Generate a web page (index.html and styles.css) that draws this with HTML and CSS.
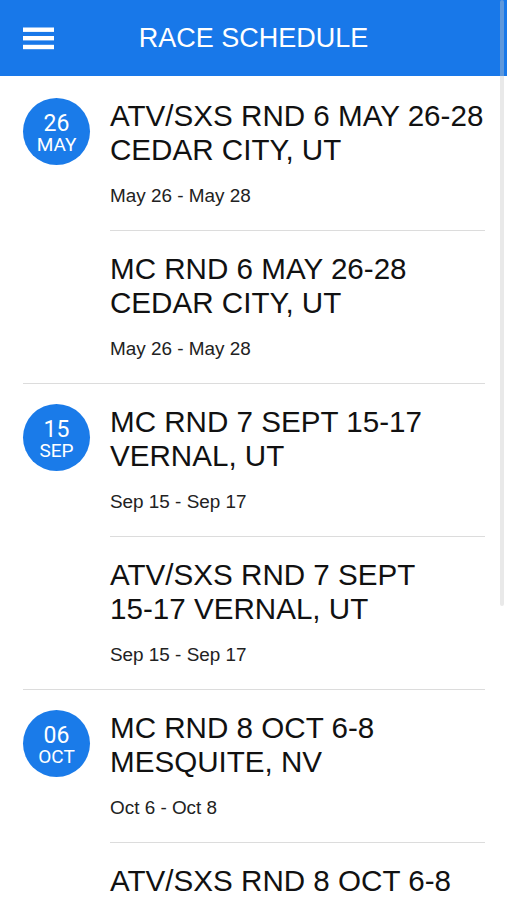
FILE: index.html
```html
<!DOCTYPE html>
<html lang="en">
<head>
    <meta charset="UTF-8">
    <meta name="viewport" content="width=device-width, initial-scale=1.0">
    <title>Race Schedule</title>
    <link rel="stylesheet" href="styles.css">
</head>
<body>
    <div class="screen">
        <header class="topbar">
            <button class="menu-btn" aria-label="Menu">
                <svg width="31" height="23" viewBox="0 0 31 23">
                    <rect x="0" y="0.5" width="31" height="4.4" fill="#fff"/>
                    <rect x="0" y="9" width="31" height="4.4" fill="#fff"/>
                    <rect x="0" y="17.8" width="31" height="4.4" fill="#fff"/>
                </svg>
            </button>
            <h1 class="title">RACE SCHEDULE</h1>
            <span></span>
        </header>

        <main class="schedule">
            <section class="group">
                <div class="badge">
                    <span class="day">26</span>
                    <span class="month">MAY</span>
                </div>
                <div class="events">
                    <div class="event">
                        <h2>ATV/SXS RND 6 MAY <span class="nb">26-28</span> CEDAR CITY, UT</h2>
                        <p>May 26 - May 28</p>
                    </div>
                    <div class="event">
                        <h2>MC RND 6 MAY <span class="nb">26-28</span> CEDAR CITY, UT</h2>
                        <p>May 26 - May 28</p>
                    </div>
                </div>
            </section>

            <section class="group">
                <div class="badge">
                    <span class="day">15</span>
                    <span class="month">SEP</span>
                </div>
                <div class="events">
                    <div class="event">
                        <h2>MC RND 7 SEPT <span class="nb">15-17</span> VERNAL, UT</h2>
                        <p>Sep 15 - Sep 17</p>
                    </div>
                    <div class="event">
                        <h2>ATV/SXS RND 7 SEPT <span class="nb">15-17</span> VERNAL, UT</h2>
                        <p>Sep 15 - Sep 17</p>
                    </div>
                </div>
            </section>

            <section class="group">
                <div class="badge">
                    <span class="day">06</span>
                    <span class="month">OCT</span>
                </div>
                <div class="events">
                    <div class="event">
                        <h2>MC RND 8 OCT <span class="nb">6-8</span> MESQUITE, NV</h2>
                        <p>Oct 6 - Oct 8</p>
                    </div>
                    <div class="event">
                        <h2>ATV/SXS RND 8 OCT <span class="nb">6-8</span> MESQUITE, NV</h2>
                        <p>Oct 6 - Oct 8</p>
                    </div>
                </div>
            </section>
        </main>

        <div class="scroll-thumb"></div>
    </div>
</body>
</html>
```

FILE: styles.css
```css
html, body {
    margin: 0;
    padding: 0;
    overflow: hidden;
}
body {
    font-family: 'Liberation Sans', Arial, sans-serif;
    background-color: #fff;
    color: #111;
}
.screen {
    position: relative;
    width: 507px;
    height: 900px;
    overflow: hidden;
}
.topbar {
    display: grid;
    grid-template-columns: 1fr auto 1fr;
    align-items: center;
    height: 76px;
    padding: 0 23px;
    box-sizing: border-box;
    background-color: #1878e9;
}
.menu-btn {
    justify-self: start;
    display: flex;
    padding: 0;
    margin: 0;
    background: none;
    border: none;
}
.title {
    margin: 0;
    padding-top: 1px;
    font-size: 27px;
    font-weight: normal;
    color: #fff;
}
.schedule {
    padding-top: 2px;
}
.group {
    display: flex;
    gap: 20px;
    margin: 0 22px 0 23px;
    border-bottom: 1.5px solid #dcdcdc;
}
.badge {
    flex: none;
    display: flex;
    flex-direction: column;
    align-items: center;
    justify-content: center;
    width: 67px;
    height: 67px;
    margin-top: 20px;
    padding-top: 4px;
    box-sizing: border-box;
    border-radius: 50%;
    background-color: #1a7be9;
    color: #fff;
    font-family: Roboto, 'Liberation Sans', sans-serif;
}
.day {
    font-size: 23px;
    line-height: 22px;
}
.month {
    font-size: 19px;
    line-height: 20px;
}
.events {
    flex: 1;
    min-width: 0;
}
.event {
    padding: 21px 0 23.5px;
}
.event + .event {
    border-top: 1.5px solid #dcdcdc;
}
.event h2 {
    margin: 0 -6px 0 0;
    font-size: 29.6px;
    font-weight: normal;
    line-height: 34px;
    color: #111;
}
.nb {
    white-space: nowrap;
}
.event p {
    margin: 17.5px 0 0;
    font-size: 18.9px;
    line-height: 22px;
    color: #222;
}
.scroll-thumb {
    position: absolute;
    top: 0;
    right: 3px;
    width: 4px;
    height: 606px;
    border-radius: 2px;
    background-color: rgba(200, 200, 200, 0.4);
}
```
